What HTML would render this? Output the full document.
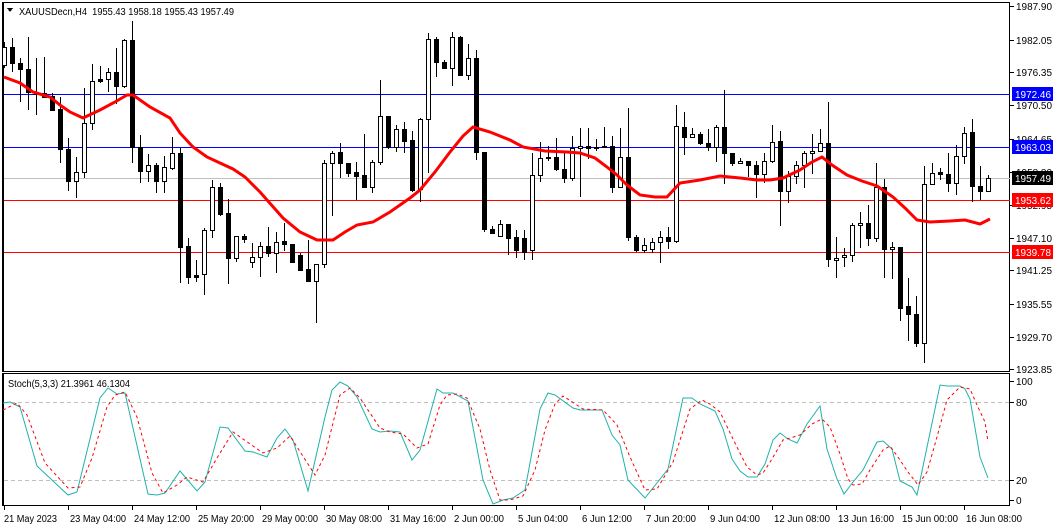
<!DOCTYPE html>
<html><head><meta charset="utf-8"><style>
html,body{margin:0;padding:0;background:#fff;}
svg{display:block;font-family:"Liberation Sans",Tahoma,sans-serif;font-size:10px;}
</style></head><body>
<svg id="s" width="1056" height="528" viewBox="0 0 1056 528" xmlns="http://www.w3.org/2000/svg" shape-rendering="crispEdges">
<rect width="1056" height="528" fill="#fff"/>
<rect x="3.5" y="2.5" width="1006" height="369" fill="none" stroke="#000"/>
<line x1="2.5" y1="2" x2="2.5" y2="372" stroke="#000"/>
<rect x="3.5" y="373.5" width="1006" height="132" fill="none" stroke="#000"/>
<line x1="2.5" y1="373" x2="2.5" y2="506" stroke="#000"/>
<line x1="4" y1="94.5" x2="1010" y2="94.5" stroke="#0000ff"/>
<line x1="4" y1="147.5" x2="1010" y2="147.5" stroke="#0000ff"/>
<line x1="4" y1="178.5" x2="1010" y2="178.5" stroke="#c0c0c0"/>
<line x1="4" y1="200.5" x2="1010" y2="200.5" stroke="#ff0000"/>
<line x1="4" y1="252.5" x2="1010" y2="252.5" stroke="#ff0000"/>
<g id="candles"></g>
<polyline id="ma" fill="none" stroke="#ff0000" stroke-width="3" shape-rendering="auto" points="4,77 20,83 33,92 50,97 60,105 70,112 83,118 100,110 115,102 127,95 133,95 150,107 170,118 180,133 193,147 207,157 220,163 233,169 245,177 260,192 283,218 300,232 317,240 333,240 345,232 357,225 373,222 390,212 410,198 420,190 435,172 450,152 463,136 473,127 490,132 510,140 523,147 545,151 567,152 580,153 595,158 607,167 617,175 627,185 640,195 655,197 667,197 680,183 700,180 720,176 740,178 757,180 770,180 783,178 800,170 812,162 822,157 832,165 847,175 862,181 877,186 893,197 905,208 917,220 930,222 950,221 965,220 980,224 990,219"/>
<line x1="4" y1="402.5" x2="1010" y2="402.5" stroke="#c0c0c0" stroke-dasharray="4,3"/>
<line x1="4" y1="480.5" x2="1010" y2="480.5" stroke="#c0c0c0" stroke-dasharray="4,3"/>
<polyline fill="none" stroke="#20b2aa" stroke-width="1" shape-rendering="auto" points="3,403 10,402 20,407 37,466 68,495 77,492 100,398 108,388 117,394 125,393 148,494 157,495 165,493 180,471 197,491 205,482 220,427 228,428 245,451 253,452 267,457 277,438 285,429 293,440 308,491 325,417 332,390 340,382 348,386 357,397 372,429 380,432 390,431 400,432 412,460 420,450 437,389 443,393 453,393 468,401 483,480 493,504 503,500 513,498 525,490 540,409 548,393 555,395 573,408 580,410 602,410 612,435 620,445 628,480 645,498 668,469 683,398 692,398 700,404 715,411 723,429 732,459 740,471 748,477 757,477 765,464 773,440 780,433 788,439 797,443 807,424 820,406 827,449 837,479 844,494 853,482 863,470 877,442 883,441 892,449 900,481 912,487 917,495 940,385 947,386 960,386 965,389 970,399 980,457 988,478"/>
<polyline fill="none" stroke="#ff0000" stroke-width="1" stroke-dasharray="3,3" shape-rendering="auto" points="3,410 17,403 27,415 45,463 68,488 80,487 92,458 107,407 115,395 125,392 137,417 152,473 163,493 177,485 187,477 203,482 217,458 233,432 263,453 277,448 290,436 315,475 325,455 340,395 350,388 360,398 380,428 390,432 403,434 417,448 428,444 440,405 447,395 457,394 467,398 480,429 490,470 500,500 510,500 523,496 535,470 545,430 555,404 563,396 583,409 603,410 617,425 630,457 645,490 657,489 673,462 690,409 702,400 710,404 720,412 733,439 747,467 757,475 763,473 772,459 783,440 790,438 800,435 812,424 822,419 830,427 840,454 848,479 853,485 862,484 870,470 883,450 890,446 900,460 908,472 918,485 927,472 937,437 947,400 960,387 970,389 977,405 985,422 988,442"/>
<path d="M7 8 L13 8 L10 12 Z" fill="#000"/>
<text x="19" y="15" fill="#000" textLength="215" lengthAdjust="spacingAndGlyphs" xml:space="preserve">XAUUSDecn,H4  1955.43 1958.18 1955.43 1957.49</text>
<text x="8" y="387" fill="#000" textLength="122" lengthAdjust="spacingAndGlyphs">Stoch(5,3,3) 21.3961 46.1304</text>
<g id="axis"></g>
</svg>
<script>
var C=[[1,47,65,42,68],[0,47,63,38,72],[0,63,69,58,102],[0,69,92,37,110],[0,92,94,58,115],[0,93,97,57,98],[0,96,110,93,111],[0,109,149,97,163],[0,149,181,138,191],[1,172,181,157,198],[1,123,172,88,178],[1,81,123,64,130],[0,79,81,66,83],[1,72,79,68,92],[0,72,86,48,104],[1,40,86,39,88],[0,40,147,21,163],[0,147,171,135,183],[1,165,171,154,182],[0,165,181,163,193],[1,167,181,156,193],[1,153,168,137,170],[0,153,247,148,283],[0,246,277,238,284],[0,275,277,260,282],[1,230,274,228,295],[1,187,230,180,238],[0,187,214,183,216],[0,213,258,199,284],[1,236,258,236,262],[0,236,239,234,243],[1,257,262,243,268],[1,246,257,242,277],[0,246,253,227,257],[1,242,253,232,273],[0,241,244,223,251],[0,244,262,244,262],[0,255,270,253,271],[0,269,281,240,282],[1,264,281,264,323],[1,163,264,160,268],[1,153,163,151,216],[0,152,163,143,178],[0,163,173,163,177],[0,172,176,162,200],[0,175,187,134,188],[1,162,187,160,193],[1,116,162,80,165],[0,116,147,116,149],[1,129,147,125,152],[0,129,141,122,153],[0,140,190,131,192],[1,119,189,118,202],[1,39,119,33,173],[0,39,62,37,77],[0,62,68,60,69],[1,37,68,32,86],[0,37,75,36,76],[1,58,75,44,80],[0,58,152,50,160],[0,152,229,152,232],[0,229,233,226,234],[1,224,236,220,237],[0,224,238,224,255],[0,237,250,230,258],[0,238,252,230,260],[1,175,250,153,260],[1,158,175,142,182],[0,157,158,146,161],[0,157,169,138,171],[0,169,178,152,183],[1,148,178,136,181],[1,146,148,128,197],[0,146,148,128,159],[1,147,148,139,151],[0,146,147,127,148],[0,146,187,136,193],[1,157,187,128,188],[0,157,237,108,241],[0,237,250,235,252],[1,245,250,238,253],[1,242,249,238,253],[1,237,242,231,263],[0,237,241,227,249],[1,126,241,105,243],[0,127,137,112,155],[1,134,137,128,138],[0,134,143,132,145],[0,143,147,129,151],[1,127,147,125,162],[0,127,153,90,184],[0,153,163,153,166],[1,161,163,158,164],[0,161,165,161,177],[0,165,174,161,198],[1,161,174,153,183],[1,142,161,125,163],[0,141,191,131,226],[1,176,191,171,203],[1,165,176,161,184],[1,153,165,151,188],[1,151,153,134,174],[1,143,151,129,152],[0,143,259,102,267],[1,258,260,237,278],[1,255,257,248,267],[1,225,255,223,262],[1,223,225,212,248],[0,223,238,205,246],[1,187,238,163,242],[0,187,249,179,278],[1,247,249,242,279],[0,247,308,247,321],[0,306,314,278,341],[0,314,343,296,347],[1,184,343,166,363],[1,173,184,163,184],[0,172,174,168,180],[0,174,183,153,192],[1,156,183,145,195],[1,133,156,127,164],[0,132,186,119,202],[0,186,191,166,200],[1,178,191,175,191]];
var h='';
for(var i=0;i<C.length;i++){var c=C[i],x=4+8*i;
h+='<line x1="'+(x+.5)+'" y1="'+c[3]+'" x2="'+(x+.5)+'" y2="'+c[4]+'" stroke="#000"/>';
var hh=Math.max(c[2]-c[1],1);
if(c[0])h+='<rect x="'+(x-1.5)+'" y="'+(c[1]+.5)+'" width="4" height="'+hh+'" fill="#fff" stroke="#000"/>';
else h+='<rect x="'+(x-2)+'" y="'+c[1]+'" width="5" height="'+(hh+1)+'" fill="#000"/>';}
document.getElementById('candles').innerHTML=h;
var a='';
var P=[["1987.90",6],["1982.05",40],["1976.35",72],["1970.50",105],["1964.65",139],["1958.80",172],["1952.95",205],["1947.10",238],["1941.25",270],["1935.55",304],["1929.70",337],["1923.85",369]];
P.forEach(function(p){a+='<line x1="1010" y1="'+(p[1]+.5)+'" x2="1014" y2="'+(p[1]+.5)+'" stroke="#000"/><text x="1016" y="'+(p[1]+4)+'" textLength="36" lengthAdjust="spacingAndGlyphs">'+p[0]+'</text>';});
var T=[["1972.46",94,"#0000ff"],["1963.03",147,"#0000ff"],["1957.49",178,"#000"],["1953.62",200,"#ff0000"],["1939.78",252,"#ff0000"]];
T.forEach(function(p){a+='<rect x="1012" y="'+(p[1]-7)+'" width="41" height="14" fill="'+p[2]+'"/><text x="1015" y="'+(p[1]+4)+'" fill="#fff" textLength="36" lengthAdjust="spacingAndGlyphs">'+p[0]+'</text>';});
[["100",381],["80",402],["20",480],["0",500]].forEach(function(p){a+='<line x1="1010" y1="'+(p[1]+.5)+'" x2="1014" y2="'+(p[1]+.5)+'" stroke="#000"/><text x="1016" y="'+(p[1]+4)+'">'+p[0]+'</text>';});
var X=[["21 May 2023",4],["23 May 04:00",68],["24 May 12:00",132],["25 May 20:00",196],["29 May 00:00",260],["30 May 08:00",324],["31 May 16:00",388],["2 Jun 00:00",452],["5 Jun 04:00",516],["6 Jun 12:00",580],["7 Jun 20:00",644],["9 Jun 04:00",708],["12 Jun 08:00",772],["13 Jun 16:00",836],["15 Jun 00:00",900],["16 Jun 08:00",964]];
X.forEach(function(p){var w=p[0].length>11?56:(p[0]=="21 May 2023"?53:50);a+='<line x1="'+(p[1]+.5)+'" y1="506" x2="'+(p[1]+.5)+'" y2="510" stroke="#000"/><text x="'+(p[1]+(p[1]==4?0:2))+'" y="522" textLength="'+w+'" lengthAdjust="spacingAndGlyphs">'+p[0]+'</text>';});
document.getElementById('axis').innerHTML=a;
</script>
</body></html>
